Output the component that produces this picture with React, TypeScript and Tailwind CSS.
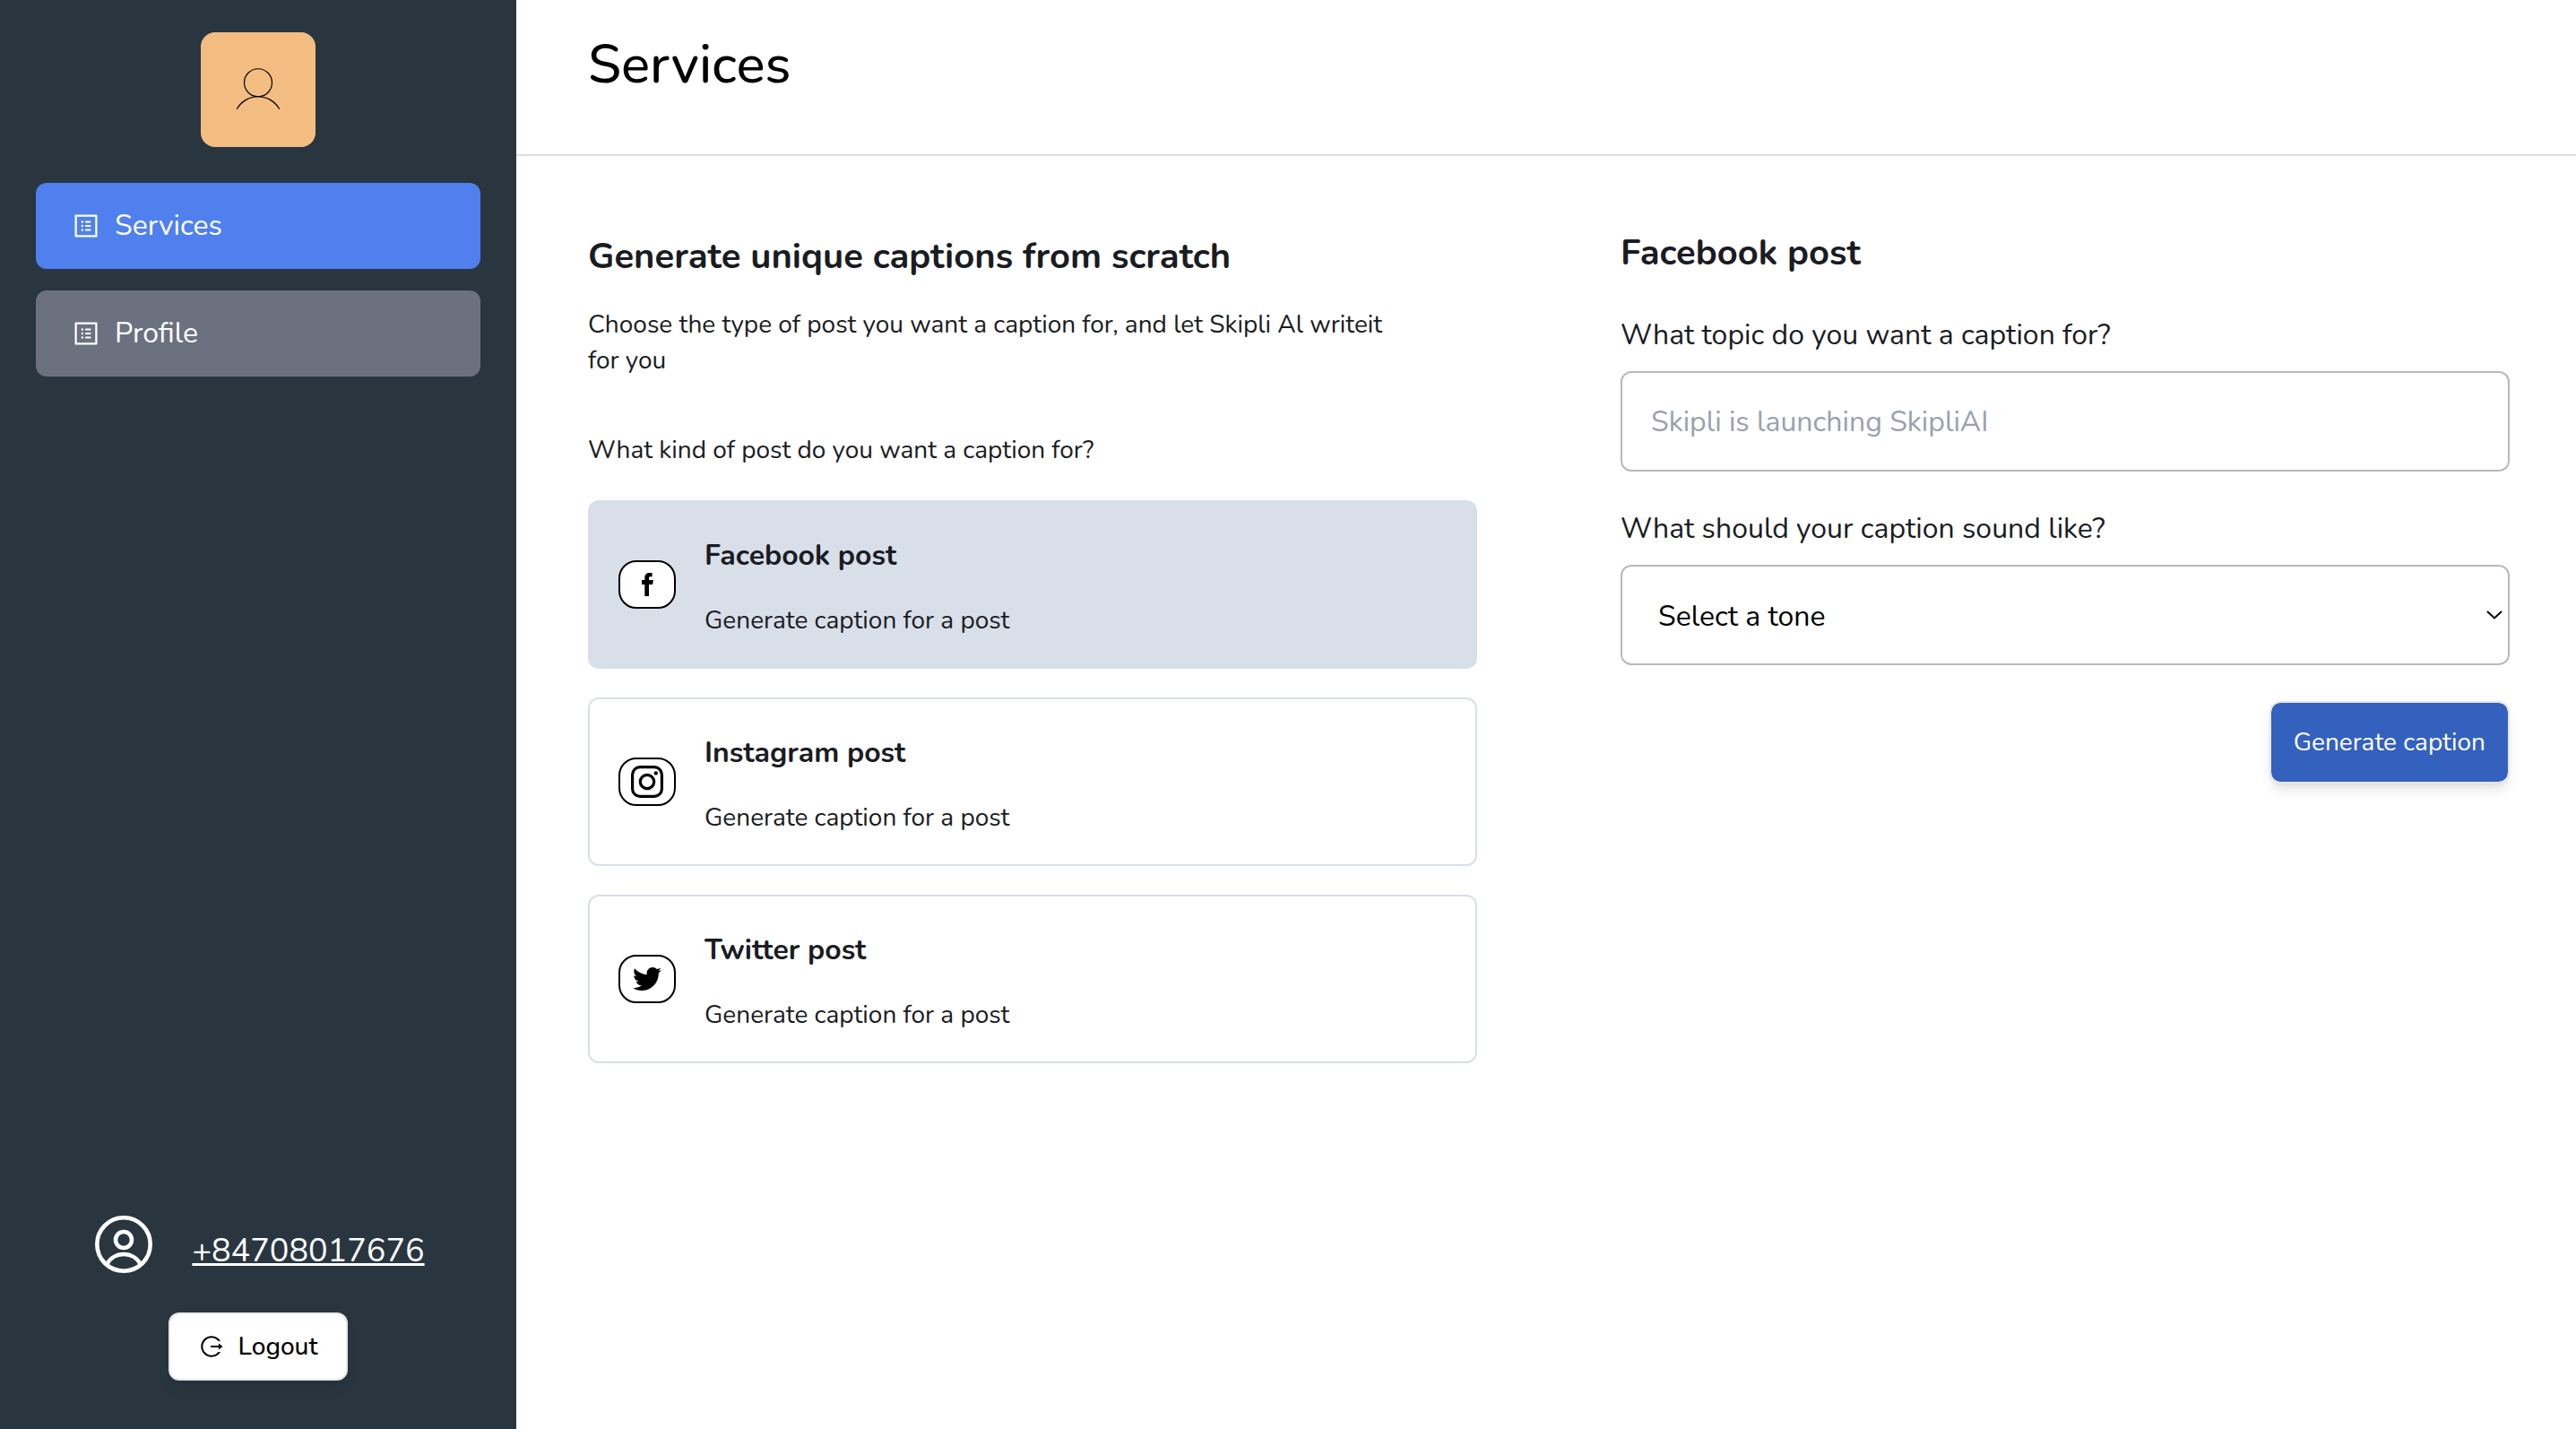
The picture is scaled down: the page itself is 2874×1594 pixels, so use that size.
import { useState } from 'react';
import type { ReactNode } from 'react';
import { AiOutlineLogout, AiOutlineProfile } from 'react-icons/ai';
import { FaTwitter } from 'react-icons/fa';

function AvatarIcon() {
  return (
    <svg viewBox="0 0 256 256" className="size-[62px]" fill="none" stroke="#000" strokeWidth="5" strokeLinecap="round" aria-hidden="true">
      <circle cx="128" cy="96" r="64" />
      <path d="M31 216a112 112 0 0 1 194 0" />
    </svg>
  );
}

function UserCircleIcon() {
  return (
    <svg viewBox="0 0 64 64" className="size-16 shrink-0" fill="none" stroke="currentColor" strokeWidth="4.6" aria-hidden="true">
      <circle cx="32" cy="32" r="29.7" />
      <circle cx="32" cy="27" r="9" />
      <path d="M13 54.500A21.500 21.500 0 0 1 51 54.500" />
    </svg>
  );
}

function FacebookIcon() {
  return (
    <svg viewBox="0 0 13 26" className="h-[26px] w-[13px]" fill="currentColor" aria-hidden="true">
      <path d="M3.300 26V13H0V8h3.300V5.500C3.300 2 5.300 0 8.600 0h3v4.200H9.500C8.400 4.200 8 4.800 8 5.800V8h4.800l-.6 5H8v13Z" />
    </svg>
  );
}

function InstagramIcon() {
  return (
    <svg viewBox="0 0 36 36" className="size-9" fill="none" stroke="currentColor" strokeWidth="3.200" aria-hidden="true">
      <rect x="1.600" y="1.600" width="32.800" height="32.800" rx="8.500" />
      <circle cx="18" cy="18" r="7.700" />
      <circle cx="27.800" cy="8.400" r="2.200" fill="currentColor" stroke="none" />
    </svg>
  );
}

function NavLink({ label, active }: { label: string; active?: boolean }) {
  return (
    <a
      href="#"
      aria-current={active ? 'page' : undefined}
      className={`flex h-24 items-center gap-4 rounded-xl px-10 text-white ${active ? 'bg-[#4f80ed]' : 'bg-[#6c717f]'}`}
    >
      <AiOutlineProfile className="size-8" aria-hidden="true" />
      <span className="text-[32px] leading-10">{label}</span>
    </a>
  );
}

const posts: { name: string; icon: ReactNode }[] = [
  { name: 'Facebook post', icon: <FacebookIcon /> },
  { name: 'Instagram post', icon: <InstagramIcon /> },
  { name: 'Twitter post', icon: <FaTwitter className="size-8" aria-hidden="true" /> },
];

export default function App() {
  const [selected, setSelected] = useState('Facebook post');

  return (
    <div className="flex min-h-screen bg-white font-['Nunito','Lato',sans-serif] text-[#1a1c23]">
      <aside className="flex w-[576px] shrink-0 flex-col bg-[#293640] px-10 pt-9 pb-[54px]">
        <div className="flex size-32 items-center justify-center self-center rounded-2xl bg-[#f3bd81]">
          <AvatarIcon />
        </div>
        <nav className="mt-10 flex flex-col gap-6">
          <NavLink label="Services" active />
          <NavLink label="Profile" />
        </nav>
        <div className="mt-auto flex flex-col items-center gap-11">
          <div className="flex items-end gap-11 pl-1 text-white">
            <UserCircleIcon />
            <a href="#" className="text-4xl leading-12 underline decoration-3 underline-offset-2 [text-decoration-skip-ink:none]">
              +84708017676
            </a>
          </div>
          <button
            type="button"
            className="flex h-19 w-[200px] items-center justify-center gap-4 rounded-xl border-2 border-gray-200 bg-white text-[28px] font-medium text-black shadow-lg"
          >
            <AiOutlineLogout className="size-7" aria-hidden="true" />
            <span className="leading-10">Logout</span>
          </button>
        </div>
      </aside>

      <main className="min-w-0 flex-1">
        <header className="h-[174px] border-b-2 border-[#d9dcea] pt-9 pl-20">
          <h1 className="text-6xl leading-18 font-medium text-black">Services</h1>
        </header>

        <div className="grid grid-cols-2 gap-40 pt-20 pr-[74px] pl-20">
          <section className="pt-1">
            <h2 className="text-[40px] leading-14 font-bold">Generate unique captions from scratch</h2>
            <p className="mt-7 w-11/12 text-[28px] leading-10">
              Choose the type of post you want a caption for, and let Skipli Al writeit for you
            </p>
            <p className="mt-15 text-[28px] leading-10">What kind of post do you want a caption for?</p>
            <div className="mt-9 flex flex-col gap-8">
              {posts.map((post) => (
                <button
                  key={post.name}
                  type="button"
                  aria-pressed={selected === post.name}
                  onClick={() => setSelected(post.name)}
                  className={`flex items-center gap-8 rounded-xl border-2 border-[#d9dfe9] px-8 text-left ${
                    selected === post.name ? 'bg-[#d9dfe9]' : 'bg-white'
                  }`}
                >
                  <span className="flex h-[54px] w-16 shrink-0 items-center justify-center rounded-[20px] border-2 border-black bg-white text-black">
                    {post.icon}
                  </span>
                  <span className="flex flex-col gap-8 pt-10 pb-8">
                    <span className="text-[32px] leading-10 font-bold">{post.name}</span>
                    <span className="text-[28px] leading-10">Generate caption for a post</span>
                  </span>
                </button>
              ))}
            </div>
          </section>

          <form className="flex flex-col" onSubmit={(e) => e.preventDefault()}>
            <h2 className="text-[40px] leading-14 font-bold">{selected}</h2>
            <label htmlFor="topic" className="mt-11 text-[32px] leading-10">
              What topic do you want a caption for?
            </label>
            <input
              id="topic"
              type="text"
              placeholder="Skipli is launching SkipliAI"
              className="mt-5 h-28 w-full rounded-xl border-2 border-[#b9b9b9] px-8 text-[32px] placeholder:text-gray-400"
            />
            <label htmlFor="tone" className="mt-11 text-[32px] leading-10">
              What should your caption sound like?
            </label>
            <div className="relative mt-5">
              <select
                id="tone"
                defaultValue=""
                className="h-28 w-full appearance-none rounded-xl border-2 border-[#b9b9b9] bg-white px-10 pt-1 text-[32px] text-black"
              >
                <option value="">Select a tone</option>
                <option>Friendly</option>
                <option>Luxury</option>
                <option>Relaxed</option>
                <option>Professional</option>
                <option>Bold</option>
                <option>Adventurous</option>
              </select>
              <svg
                viewBox="0 0 18 10"
                className="pointer-events-none absolute top-1/2 right-2 h-[10px] w-[18px] -translate-y-1/2"
                fill="none"
                stroke="#000"
                strokeWidth="2"
                aria-hidden="true"
              >
                <path d="M1 1l8 7.500L17 1" />
              </svg>
            </div>
            <button
              type="submit"
              className="mt-10 h-23 self-end rounded-xl border-2 border-gray-200 bg-[#3461bd] bg-clip-padding px-[25px] text-[28px] text-white shadow-lg"
            >
              Generate caption
            </button>
          </form>
        </div>
      </main>
    </div>
  );
}
